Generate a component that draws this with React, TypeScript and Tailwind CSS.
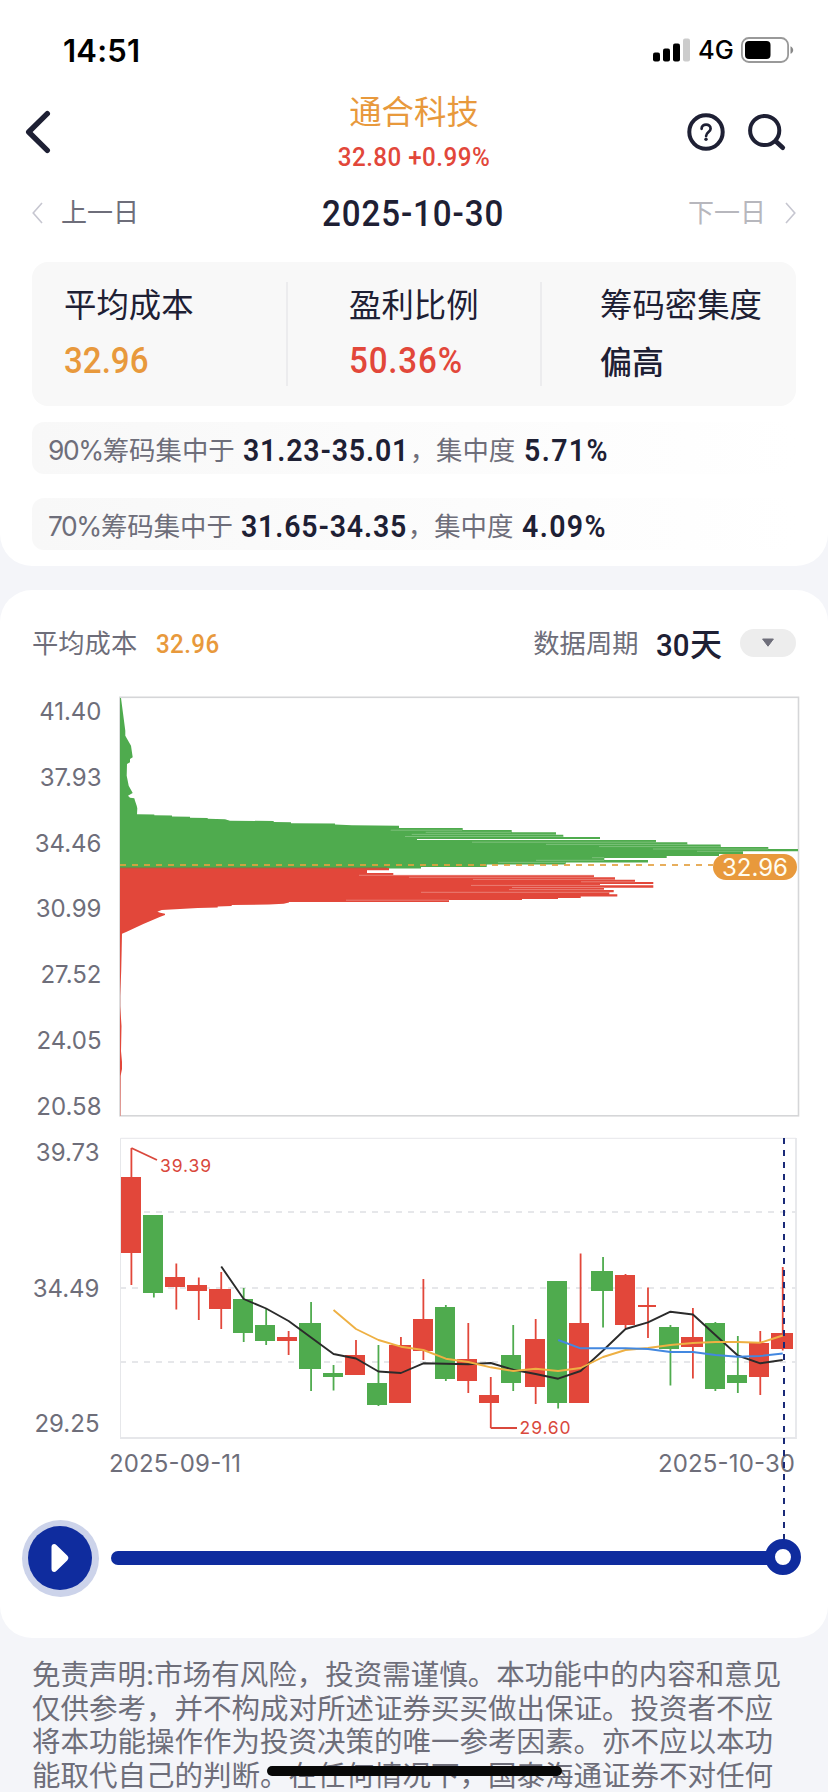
import React from 'react';

type Side = 'up' | 'down';

// [left, width, body top, body bottom, high, low, side]
type Candle = [number, number, number, number, number, number, Side];

const RED = '#e2473a';
const GREEN = '#4fab4e';

const PRICE_TICKS = ['41.40', '37.93', '34.46', '30.99', '27.52', '24.05', '20.58'];

// [y, right edge] of every chip row, top to bottom
const GREEN_ROWS: [number, number][] = [
  [132, 343.7], [134, 392.7], [136.3, 437], [138.7, 444.3], [141, 481], [144, 537], [146.3, 568.3],
  [148.6, 601.7], [151, 649.3], [153, 679], [155.3, 624], [158, 600], [160, 547.7], [162.1, 485.3],
  [164.1, 529], [166.4, 446.7], [168.6, 367.7], [171, 302], [172.6, 0],
];

const RED_ROWS: [number, number][] = [
  [172, 270], [174.3, 248], [177, 274.3], [179, 475], [181.3, 496], [183.7, 516], [186, 534.3],
  [188, 481], [189.3, 534.3], [191.7, 485], [194, 494.7], [196.3, 490.3], [198.3, 498.3],
  [200.4, 461.7], [202, 439], [203, 403], [204, 330], [206, 0],
];

// light gaps between neighbouring rows: [y, from, to]
const GREEN_SEAMS: [number, number, number][] = [
  [134.2, 271.7, 343], [136.3, 306.7, 392], [138.4, 292.7, 437], [140.5, 286, 444], [146.2, 353, 537],
  [148.4, 427, 568], [150.6, 480, 601], [153, 534, 649], [155.3, 578, 624], [161.7, 473, 485],
  [164.3, 417, 485], [166.4, 379, 446],
];

const RED_SEAMS: [number, number, number][] = [
  [179.3, 240, 475], [181.3, 290, 475], [183.4, 354, 496], [185.8, 462, 516], [189.4, 352, 481],
  [191.5, 393, 485], [193.6, 390, 485], [196.3, 302, 490], [204.2, 227, 330],
];

const GREEN_TAIL =
  '1,2 2,2 6.3,34.7 6.3,39.7 12,49.7 13.7,61.3 11,63 11,66.3 8,68 7.7,79.7 9.7,89.7 13.7,97 9,99.7 11,101.7 15.3,102.3 16,104.7 17.7,109.7 18.3,112.3 18,118.3 35.3,118.6 35.3,119.3 53,119.6 53,120.6 71,120.8 71,121.8 88.7,122 88.7,122.8 106,123.2 111,124.7 154.7,125 154.7,126 172,126.3 172,127.3 216,127.6 216,128.6 233,129.2 280,129.8 280,133 1,133';

const RED_TAIL =
  '1,205 170,205 170,206.6 164.7,207.8 150,208.5 112.7,209 112.7,210 98.7,210.4 98.7,211.4 78.7,212 61,213 42.7,214 38.3,215.7 41.3,216.7 46,217.7 46,219 41.3,220.7 24.3,228 7.7,235.7 3,237.7 2.7,253 2.2,275 1.2,300 1.2,310 2.5,330 2,355 3,366 3,373 1.6,380 1.4,420 1,420';

const CANDLES: Candle[] = [
  [121, 20, 57, 133, 28, 165, 'up'],
  [143, 20, 95, 173, 95, 177.5, 'down'],
  [165, 20, 157, 167, 143.5, 189.5, 'up'],
  [187, 20, 165, 171, 157.5, 200, 'up'],
  [209, 22, 169, 189, 152, 209, 'up'],
  [233, 20, 179, 213, 168, 222, 'down'],
  [255, 20, 205, 221, 189, 225, 'down'],
  [277, 20, 217, 221, 211, 235, 'up'],
  [299, 22, 203, 249, 182, 271, 'down'],
  [323, 20, 253, 257, 245, 270.5, 'down'],
  [345, 20, 235, 255, 220, 255, 'up'],
  [367, 20, 263, 285, 225, 286, 'down'],
  [389, 22, 225, 283, 217, 283, 'up'],
  [413, 20, 199, 231, 159, 240, 'up'],
  [435, 20, 187, 259, 185, 261, 'down'],
  [457, 20, 239, 261, 203, 273, 'up'],
  [479, 20, 275, 283, 257, 308, 'up'],
  [501, 20, 235, 263, 205, 271, 'down'],
  [525, 20, 219, 267, 199, 284, 'up'],
  [547, 20, 161, 283, 161, 288.5, 'down'],
  [569, 20, 203, 283, 133.5, 283, 'up'],
  [591, 22, 151, 171, 137, 207.5, 'down'],
  [615, 20, 155, 205, 154, 208, 'up'],
  [638, 18, 185, 187, 167.5, 218, 'up'],
  [659, 20, 207, 229, 205, 265.5, 'down'],
  [681, 22, 217, 227, 188, 258.5, 'up'],
  [705, 20, 203, 269, 202, 271, 'down'],
  [727, 20, 255, 263, 216, 273, 'down'],
  [749, 20, 223, 257, 211, 275, 'up'],
  [771, 22, 213, 229, 147, 230.5, 'up'],
];

const MA5 = [146.5, 179, 188.5, 201, 217.5, 234, 238.5, 251.5, 253, 243.3, 243.7, 244.3, 243, 249.7, 254, 258.7, 251, 230.5, 209, 202.3, 191.7, 194.5, 215, 235.5, 243.3, 240];
const MA10 = [190, 209, 220, 226.7, 230, 238.7, 242, 247.3, 251, 248.7, 251, 248, 237, 230, 228, 225, 223, 222, 222, 222.7, 215.5];
const MA20 = [220, 228.3, 228.3, 228.3, 229, 232, 232, 235, 236.7, 236, 233.5];

const centerOf = (i: number) => 131.4 + i * 22.46;

// every average runs up to the last candle
const toPoints = (values: number[]) =>
  values.map((v, i) => `${centerOf(CANDLES.length - values.length + i)},${v}`).join(' ');

const StatusBar = () => (
  <div className="flex h-[100px] items-center justify-between pr-[33px] pl-[63px]">
    <span className="font-['Inter'] text-[31px] leading-none font-semibold tracking-[0.2px] text-black">14:51</span>
    <div className="flex items-center text-black">
      <svg width="38" height="24" viewBox="0 0 38 24">
        <rect x="0" y="14.5" width="7" height="9" rx="2" />
        <rect x="10" y="10.5" width="7" height="13" rx="2" />
        <rect x="20" y="5.5" width="7" height="18" rx="2" />
        <rect x="30" y="0.5" width="7" height="23" rx="2" fill="#cccccc" />
      </svg>
      <span className="ml-[7px] w-[36px] font-['Inter'] text-[25.5px] leading-none font-medium">4G</span>
      <svg className="ml-[7px]" width="54" height="26" viewBox="0 0 54 26">
        <rect x="0.9" y="1" width="46.2" height="24" rx="7" fill="none" stroke="#999" strokeWidth="1.8" />
        <rect x="4" y="4" width="25.5" height="18" rx="4" />
        <path d="M49.5 9.2c3.6 1.6 3.6 6 0 7.6z" fill="#888" />
      </svg>
    </div>
  </div>
);

const Header = () => (
  <div className="flex h-[84px] items-start justify-between pr-[40px] pl-[24px]">
    <div className="w-[118px] pt-[10px]">
      <svg width="28" height="44" viewBox="0 0 28 44" fill="none" stroke="#1e2034" strokeWidth="5.4" strokeLinecap="round" strokeLinejoin="round">
        <path d="M23.3 3.7L4.7 22L23.3 40.3" />
      </svg>
    </div>
    <div className="flex flex-col items-center">
      <div className="text-[32.4px] leading-[26px] text-[#e8993c]">通合科技</div>
      <div className="mt-[17px] scale-x-[0.93] font-['Roboto'] text-[26px] leading-[28px] font-medium tracking-[0.5px] text-[#e2473a]">32.80 +0.99%</div>
    </div>
    <div className="flex w-[102px] gap-[22px] pt-[12px]">
      <svg width="40" height="40" viewBox="0 0 40 40" fill="none" stroke="#1e2034">
        <circle cx="20" cy="20" r="16.7" strokeWidth="4" />
        <path d="M15.6 16.8c0-5.6 9-5.6 9 0c0 3-4.5 3.5-4.5 7.2" strokeWidth="2.7" strokeLinecap="round" />
        <circle cx="20" cy="27.3" r="1.7" fill="#1e2034" stroke="none" />
      </svg>
      <svg width="40" height="40" viewBox="0 0 40 40" fill="none" stroke="#1e2034" strokeWidth="4" strokeLinecap="round">
        <circle cx="16.7" cy="18.5" r="14.6" />
        <path d="M28.3 29.8L34.8 35.8" strokeWidth="4.6" />
      </svg>
    </div>
  </div>
);

const DateSwitcher = () => (
  <div className="flex h-[58px] items-center justify-between px-8 text-[26px] leading-none">
    <div className="flex items-center gap-[17px] text-[#6e6e7a]">
      <svg width="12" height="22" viewBox="0 0 12 22" fill="none" stroke="#c6c6d0" strokeWidth="1.6">
        <path d="M10 1L1.2 11L10 21" />
      </svg>
      上一日
    </div>
    <div className="scale-x-[0.92] pt-[2px] font-['Roboto'] text-[36px] font-medium tracking-[1px] text-[#1e2034]">2025-10-30</div>
    <div className="flex items-center gap-[18px] text-[#b7b7bd]">
      下一日
      <svg width="12" height="22" viewBox="0 0 12 22" fill="none" stroke="#c6c6d0" strokeWidth="1.6">
        <path d="M2 1L10.8 11L2 21" />
      </svg>
    </div>
  </div>
);

const SummaryCard = () => (
  <div className="mx-8 mt-5 flex h-[144px] items-center rounded-2xl bg-[#f8f8f8] text-[32.4px] text-[#1e2034]">
    <div className="h-[104px] w-[256px] border-r-2 border-[#ececee] pl-8">
      <div className="leading-[47px]">平均成本</div>
      <div className="mt-[9px] origin-left scale-x-[0.92] font-['Roboto'] text-[36px] leading-[46px] font-medium text-[#e8993c]">32.96</div>
    </div>
    <div className="h-[104px] w-[254px] border-r-2 border-[#ececee] pl-[61px]">
      <div className="leading-[47px]">盈利比例</div>
      <div className="mt-[9px] origin-left scale-x-[0.92] font-['Roboto'] text-[36px] leading-[46px] font-medium tracking-[0.9px] text-[#e2473a]">50.36%</div>
    </div>
    <div className="h-[104px] pl-[58px]">
      <div className="leading-[47px]">筹码密集度</div>
      <div className="mt-[11px] text-[32px] leading-[46px] font-medium">偏高</div>
    </div>
  </div>
);

interface ChipRangeProps {
  percent: string;
  range: string;
  ratio: string;
}

const ChipRange: React.FC<ChipRangeProps> = ({ percent, range, ratio }) => (
  <div className="mx-8 flex h-[52px] items-center rounded-xl bg-gradient-to-r from-[#f8f8f8] to-white pt-[5px] pl-4 text-[26.4px] leading-[47px] whitespace-pre text-[#6e6e7a]">
    <span><span className="tracking-[-1.4px]">{percent}</span>筹码集中于</span>
    <span className="ml-[8px] w-[168px] origin-left scale-x-[0.92] font-['Roboto'] text-[31px] font-semibold tracking-[0.9px] text-[#1e2034]">{range}</span>
    <span className="-ml-px">，集中度</span>
    <span className="ml-[9px] origin-left scale-x-[0.92] font-['Roboto'] text-[31px] font-semibold tracking-[1.5px] text-[#1e2034]">{ratio}</span>
  </div>
);

const ChartHeader = () => (
  <div className="flex h-[106px] items-center justify-between px-8 text-[26.3px] leading-none text-[#6e6e7a]">
    <div className="flex items-center">
      <span className="pt-[3px]">平均成本</span>
      <span className="ml-[19px] origin-left scale-x-[0.93] pt-[3px] font-['Roboto'] text-[26px] font-medium tracking-[0.4px] text-[#e8993c]">32.96</span>
    </div>
    <div className="flex items-center">
      <span className="pt-[3px]">数据周期</span>
      <span className="ml-[18px] flex items-center pt-[4px] text-[32px] font-medium text-[#1e2034]">
        <span className="w-[33.5px] origin-left scale-x-[0.92] font-['Roboto']">30</span>天
      </span>
      <span className="ml-[18px] flex h-7 w-14 items-center justify-center rounded-full bg-[#ededed]">
        <svg width="14" height="10" viewBox="0 0 14 10">
          <path d="M1.6 1h10.8L7 8.2z" fill="#6e6e7a" stroke="#6e6e7a" strokeLinejoin="round" />
        </svg>
      </span>
    </div>
  </div>
);

const stairPath = (rows: [number, number][]) => {
  const steps = rows.slice(0, -1).map(([y, right], i) => `L${right} ${y}V${rows[i + 1][0]}`);
  return `M1 ${rows[0][0]}${steps.join('')}H1Z`;
};

const seamLines = (seams: [number, number, number][], stroke: string) =>
  seams.map(([y, from, to]) => <line key={y} x1={from} x2={to} y1={y} y2={y} stroke={stroke} strokeWidth={0.7} />);

const ChipDistribution = () => (
  <div className="flex h-[421px]">
    <div className="flex w-[119px] flex-col justify-between pt-[2px] pr-[17.5px] text-right font-['Inter'] text-[24px] leading-[24px] text-[#6e6e7a]">
      {PRICE_TICKS.map((tick) => (
        <span key={tick} className="relative top-[2px]">{tick}</span>
      ))}
    </div>
    <svg width="682" height="421" viewBox="0 0 682 421">
      <rect x="1" y="1.3" width="678.5" height="418.5" fill="none" stroke="#d5d6d8" strokeWidth="1.6" />
      <polygon points={GREEN_TAIL} fill={GREEN} />
      <path d={stairPath(GREEN_ROWS)} fill={GREEN} />
      <rect x="298" y="143" width="240" height="1" fill="#fff" />
      {seamLines(GREEN_SEAMS, '#8fca8e')}
      <path d={stairPath(RED_ROWS)} fill={RED} />
      <polygon points={RED_TAIL} fill={RED} />
      {seamLines(RED_SEAMS, '#ee958e')}
      <line x1="1" x2="268" y1="171.8" y2="171.8" stroke="#8a7440" strokeWidth="1" />
      <line x1="1" x2="594" y1="169" y2="169" stroke="#e3a03f" strokeOpacity="0.85" strokeWidth="2" strokeDasharray="6 6" />
      <rect x="594" y="158" width="84" height="26" rx="13" fill="#e8993c" />
      <text x="636" y="180.3" textAnchor="middle" fontFamily="Inter" fontSize="24" fill="#fffdf0">32.96</text>
    </svg>
  </div>
);

const CandleChart = () => (
  <svg className="block overflow-visible" width="828" height="399" viewBox="0 0 828 399">
    <g fontFamily="Inter" fontSize="24" fill="#6e6e7a">
      <text x="99.5" y="41.3" textAnchor="end">39.73</text>
      <text x="99.5" y="177.3" textAnchor="end">34.49</text>
      <text x="99.5" y="312.3" textAnchor="end">29.25</text>
      <text x="109" y="352.3" textLength="132">2025-09-11</text>
      <text x="658" y="352.3" textLength="137">2025-10-30</text>
    </g>
    <g stroke="#e6e7ea">
      <path d="M120.5 318V18.3H796" fill="none" strokeWidth="1" />
      <path d="M120 318H796V18" fill="none" strokeWidth="1.8" />
      <path d="M120 92H796M120 168H796M120 242H796" strokeWidth="1.8" strokeDasharray="6 6" />
    </g>
    {CANDLES.map(([x, w, top, bottom, high, low, side], i) => {
      const color = side === 'up' ? RED : GREEN;
      return (
        <g key={x}>
          <line x1={centerOf(i)} x2={centerOf(i)} y1={high} y2={low} stroke={color} strokeWidth="1.8" />
          <rect x={x} y={top} width={w} height={bottom - top} fill={color} />
        </g>
      );
    })}
    <g fill="none" strokeWidth="1.9" strokeLinejoin="round">
      <polyline points={toPoints(MA5)} stroke="#2b2b2b" />
      <polyline points={toPoints(MA10)} stroke="#eeb043" />
      <polyline points={toPoints(MA20)} stroke="#4388e0" />
      <path d="M131.4 28L157 40M490.7 308H517" stroke="#d9483c" />
    </g>
    <g fontFamily="Inter" fontSize="17.5" fill="#d9483c">
      <text x="160" y="52" textLength="51">39.39</text>
      <text x="519.6" y="314" textLength="51">29.60</text>
    </g>
    <line x1="784" x2="784" y1="18" y2="420" stroke="#1a2a78" strokeWidth="2" strokeDasharray="6 6" />
  </svg>
);

const Timeline = () => (
  <div className="flex h-[78px] items-center pl-[21.5px]">
    <button className="flex h-[77px] w-[77px] items-center justify-center rounded-full bg-[#ccd3ea]">
      <span className="flex h-[64px] w-[64px] items-center justify-center rounded-full bg-[#0f2c9e]">
        <svg width="20" height="30" viewBox="0 0 20 30" fill="#fff">
          <path d="M1.5 4C1.5 1 4.5 0 6.6 2.2L17.2 12.6C18.8 14.2 18.8 15.8 17.2 17.4L6.6 27.8C4.5 30 1.5 29 1.5 26Z" />
        </svg>
      </span>
    </button>
    <div className="ml-[12.5px] h-[14px] w-[660px] rounded-l-full bg-[#0f2c9e]" />
    <div className="z-10 mb-[2px] -ml-[6px] h-9 w-9 rounded-full border-[10px] border-[#0f2c9e] bg-white" />
  </div>
);

const DISCLAIMER = [
  '免责声明:市场有风险，投资需谨慎。本功能中的内容和意见',
  '仅供参考，并不构成对所述证券买买做出保证。投资者不应',
  '将本功能操作作为投资决策的唯一参考因素。亦不应以本功',
  '能取代自己的判断。在任何情况下，国泰海通证券不对任何',
];

export default function App() {
  return (
    <div className="relative h-[1792px] w-[828px] overflow-hidden bg-[#f4f5f9] font-['Inter','Noto_Sans_CJK_SC',sans-serif]">
      <section className="h-[566px] rounded-b-[32px] bg-white">
        <StatusBar />
        <Header />
        <DateSwitcher />
        <SummaryCard />
        <div className="mt-4 flex flex-col gap-6">
          <ChipRange percent="90%" range="31.23-35.01" ratio="5.71%" />
          <ChipRange percent="70%" range="31.65-34.35" ratio="4.09%" />
        </div>
      </section>

      <section className="mt-6 h-[1048px] rounded-[32px] bg-white">
        <ChartHeader />
        <ChipDistribution />
        <div className="mt-[3px]">
          <CandleChart />
        </div>
        <Timeline />
      </section>

      <div className="pt-5 pl-8 text-[28.5px] leading-[33.5px] whitespace-nowrap text-[#6e6e7a]">
        {DISCLAIMER.map((line) => (
          <p key={line}>{line}</p>
        ))}
      </div>

      <div className="absolute top-[1766px] left-[267px] h-[10px] w-[295px] rounded-full bg-[#080808]" />
    </div>
  );
}
